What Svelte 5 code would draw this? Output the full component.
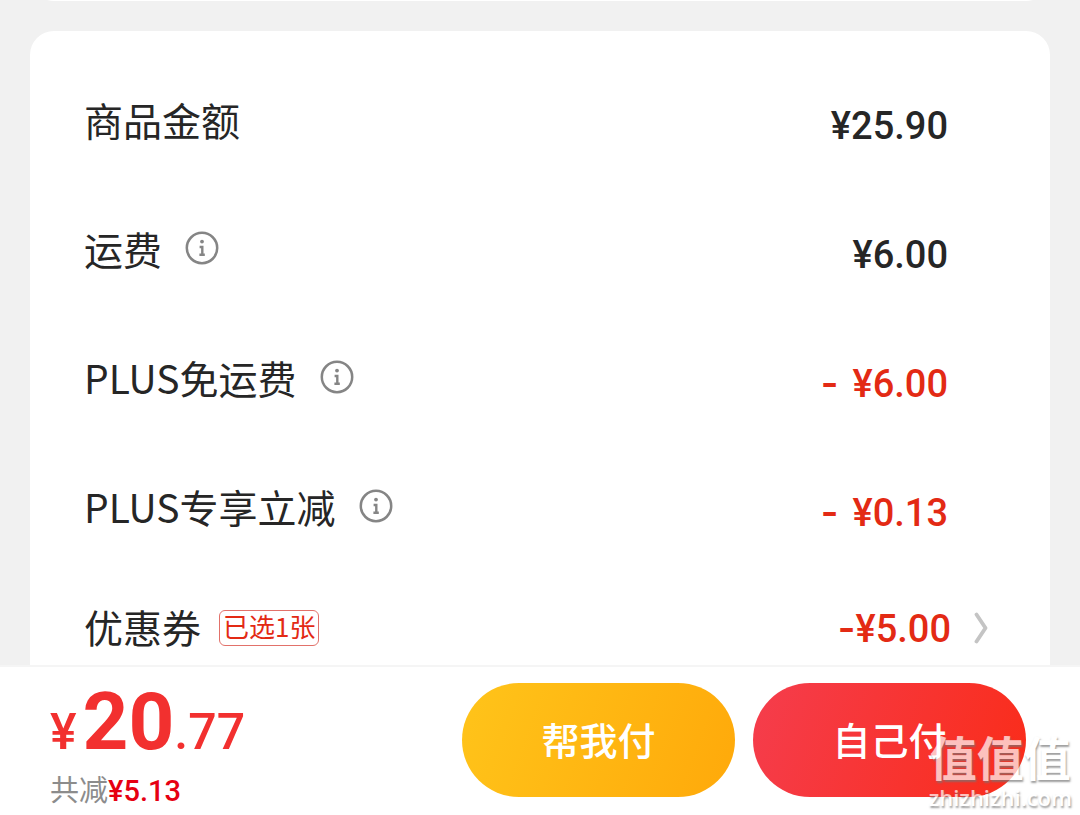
<script lang="ts">
  type Row = {
    label: string;
    price: string;
    info?: boolean;
    discount?: boolean;
  };

  // 费用明细
  const rows: Row[] = [
    { label: '商品金额', price: '¥25.90' },
    { label: '运费', price: '¥6.00', info: true },
    { label: 'PLUS免运费', price: '¥6.00', info: true, discount: true },
    { label: 'PLUS专享立减', price: '¥0.13', info: true, discount: true },
  ];
</script>

<div class="page">
  <main class="content">
    <div class="prev-card"></div>

    <section class="card">
      {#each rows as row}
        <div class="row">
          <span class="label">{row.label}</span>
          {#if row.info}
            <button class="info" type="button" aria-label={row.label}>
              <svg viewBox="0 0 34 34" width="34" height="34">
                <circle cx="17" cy="17" r="15.2" fill="none" stroke="#858585" stroke-width="2.5" />
                <circle cx="17" cy="10.6" r="1.9" fill="#858585" />
                <path d="M14.6 16h2.7v7.2M14.4 23.8h5.4" fill="none" stroke="#858585" stroke-width="2.4" />
              </svg>
            </button>
          {/if}
          <span class="price" class:discount={row.discount}>
            {#if row.discount}<span class="minus">-</span>{/if}{row.price}
          </span>
        </div>
      {/each}

      <div class="row coupon">
        <span class="label">优惠券</span>
        <span class="tag">已选1张</span>
        <button class="coupon-value" type="button">
          <span><span class="dash">-</span>¥5.00</span>
          <svg viewBox="0 0 14 32" width="14" height="32" aria-hidden="true">
            <path d="M2.5 2.5L11.5 16L2.5 29.5" fill="none" stroke="#c4c4c4" stroke-width="3.8" stroke-linecap="round" stroke-linejoin="round" />
          </svg>
        </button>
      </div>
    </section>
  </main>

  <footer class="bar">
    <div class="summary">
      <div class="total">
        <span class="part">¥</span><span class="integer">20</span><span class="part">.77</span>
      </div>
      <div class="saved">共减<span class="saved-price">¥5.13</span></div>
    </div>
    <button class="pay friend" type="button">帮我付</button>
    <button class="pay self" type="button">自己付</button>
  </footer>

  <div class="watermark">
    <span class="mark">值值值</span>
    <span class="site">zhizhizhi.com</span>
  </div>
</div>

<style>
  :global(body) {
    margin: 0;
    background: #f1f1f1;
  }
  .page {
    position: relative;
    display: flex;
    flex-direction: column;
    height: 100vh;
    overflow: hidden;
    font-family: 'Noto Sans CJK SC', sans-serif;
    color: #262626;
  }
  button {
    padding: 0;
    border: none;
    background: none;
    font-family: inherit;
    cursor: pointer;
  }
  svg {
    display: block;
  }
  .content {
    flex: 1;
    min-height: 0;
    overflow: hidden;
  }
  .prev-card {
    height: 48px;
    margin: -47px 30px 30px;
    border-radius: 24px;
    background: #fff;
  }
  .card {
    margin: 0 30px;
    padding: 27px 0 40px;
    border-radius: 24px;
    background: #fff;
  }
  .row {
    display: flex;
    align-items: center;
    height: 129px;
    padding: 0 102px 0 54px;
  }
  .label {
    padding-bottom: 8px;
    font-size: 39px;
    line-height: 56px;
  }
  .info {
    margin: 0 0 8px 23px;
  }
  .price,
  .coupon-value {
    margin-left: auto;
    font-family: Roboto, sans-serif;
    font-size: 38px;
    font-weight: 500;
    line-height: 44px;
  }
  .price {
    padding-top: 6px;
  }
  .discount,
  .coupon-value {
    color: #e32a14;
  }
  .minus,
  .dash {
    font-family: Inter, sans-serif;
    font-weight: 600;
  }
  .minus {
    margin-right: 14px;
  }
  .row.coupon {
    height: 108px;
    padding-right: 62px;
  }
  .coupon .label {
    padding-bottom: 4px;
  }
  .tag {
    margin-left: 18px;
    padding: 0 3px 4px;
    border: 1px solid #e2716a;
    border-radius: 6px;
    font-size: 26px;
    line-height: 30px;
    color: #e32a14;
  }
  .coupon-value {
    display: flex;
    align-items: center;
    gap: 23px;
  }
  .bar {
    display: flex;
    align-items: center;
    gap: 18px;
    height: 146px;
    padding: 0 54px 2px 50px;
    border-top: 2px solid #f5f5f5;
    background: #fff;
  }
  .summary {
    flex: 1;
    padding-top: 28px;
  }
  .total {
    display: flex;
    align-items: baseline;
    margin-bottom: 12px;
    font-family: Roboto, sans-serif;
    line-height: 48px;
    color: #f2302f;
  }
  .part {
    font-size: 50px;
    font-weight: 500;
  }
  .integer {
    margin-left: 6px;
    font-size: 80px;
    font-weight: 700;
  }
  .saved {
    font-size: 29px;
    line-height: 40px;
    color: #8c8c8c;
  }
  .saved-price {
    font-family: Roboto, sans-serif;
    font-weight: 500;
    color: #e60012;
  }
  .pay {
    width: 273px;
    height: 114px;
    padding-bottom: 4px;
    border-radius: 57px;
    font-size: 38px;
    font-weight: 500;
    color: #fff;
  }
  .friend {
    background: linear-gradient(110deg, #ffc41a, #ffa90a);
  }
  .self {
    background: linear-gradient(110deg, #f53d4d, #fa2c19);
  }
  .watermark {
    position: absolute;
    right: 8px;
    bottom: 4px;
    display: flex;
    flex-direction: column;
    align-items: center;
    color: #fff;
    text-shadow: 1px 2px 2px #777;
    opacity: 0.7;
    pointer-events: none;
  }
  .mark {
    font-size: 47px;
    font-weight: 700;
    line-height: 50px;
  }
  .site {
    padding-top: 2px;
    font-family: 'Open Sans', sans-serif;
    font-size: 22px;
    font-weight: 600;
    line-height: 28px;
  }
</style>
